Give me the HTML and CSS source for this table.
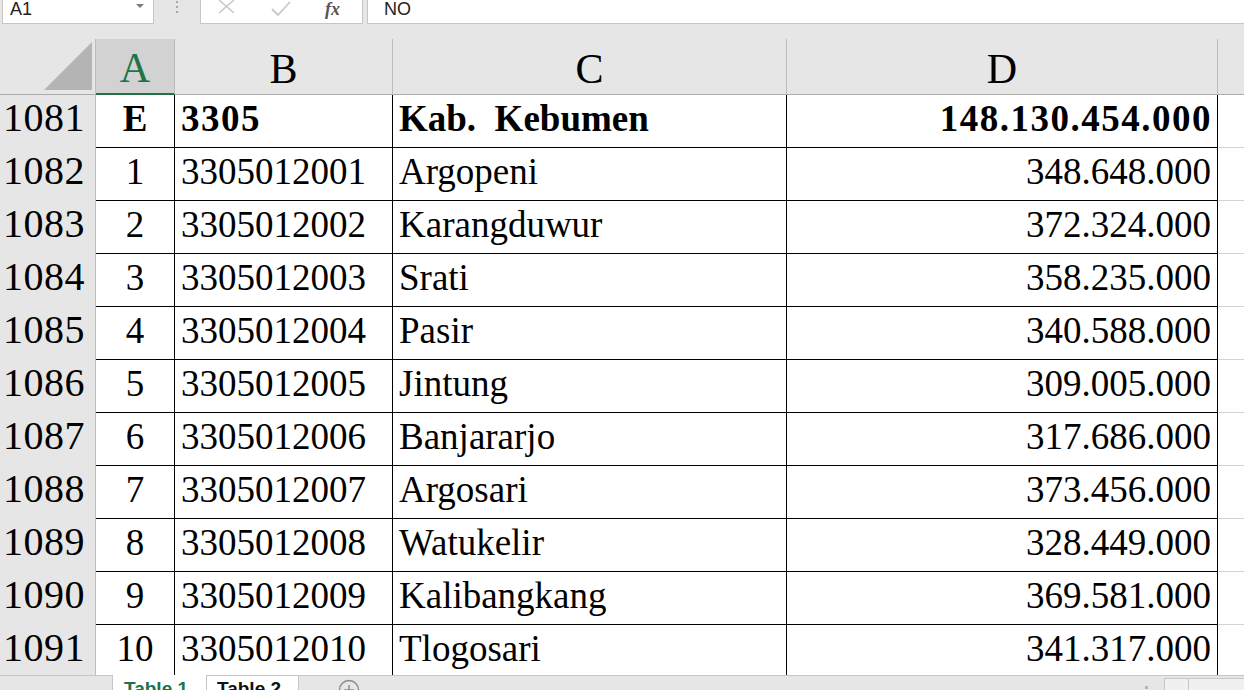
FILE: index.html
```html
<!DOCTYPE html>
<html>
<head>
<meta charset="utf-8">
<link rel="stylesheet" href="styles.css">
</head>
<body>
<div class="app">
  <div class="fbar">
    <div class="namebox">
      <span class="nb-text">A1</span>
      <svg class="nb-arrow" width="8" height="5" viewBox="0 0 8 5"><path d="M0 0H8L4 4Z" fill="#7a7a7a"/></svg>
    </div>
    <div class="dots"><i></i><i></i><i></i></div>
    <div class="btns">
      <svg class="ico" width="18" height="14" viewBox="0 0 18 14"><path d="M1 0L16 13M16 0L1 13" stroke="#c8c8c8" stroke-width="1.6" fill="none"/></svg>
      <svg class="ico" width="20" height="15" viewBox="0 0 20 15"><path d="M1 8L7 14L19 1" stroke="#c8c8c8" stroke-width="1.8" fill="none"/></svg>
      <span class="fx">fx</span>
    </div>
    <div class="finput">NO</div>
  </div>

  <div class="sheet">
    <div class="grid">
      <div class="corner"><svg width="48" height="48" viewBox="0 0 48 48"><path d="M48 0V48H0Z" fill="#b4b4b4"/></svg></div>
      <div class="ch sel">A</div>
      <div class="ch">B</div>
      <div class="ch">C</div>
      <div class="ch">D</div>
      <div class="ch last"></div>

      <div class="rh">1081</div>
      <div class="c ca b">E</div>
      <div class="c cl b num">3305</div>
      <div class="c cl b">Kab.&nbsp; Kebumen</div>
      <div class="c cr b num">148.130.454.000</div>
      <div class="c ce"></div>

      <div class="rh">1082</div>
      <div class="c ca">1</div>
      <div class="c cl">3305012001</div>
      <div class="c cl">Argopeni</div>
      <div class="c cr">348.648.000</div>
      <div class="c ce"></div>

      <div class="rh">1083</div>
      <div class="c ca">2</div>
      <div class="c cl">3305012002</div>
      <div class="c cl">Karangduwur</div>
      <div class="c cr">372.324.000</div>
      <div class="c ce"></div>

      <div class="rh">1084</div>
      <div class="c ca">3</div>
      <div class="c cl">3305012003</div>
      <div class="c cl">Srati</div>
      <div class="c cr">358.235.000</div>
      <div class="c ce"></div>

      <div class="rh">1085</div>
      <div class="c ca">4</div>
      <div class="c cl">3305012004</div>
      <div class="c cl">Pasir</div>
      <div class="c cr">340.588.000</div>
      <div class="c ce"></div>

      <div class="rh">1086</div>
      <div class="c ca">5</div>
      <div class="c cl">3305012005</div>
      <div class="c cl">Jintung</div>
      <div class="c cr">309.005.000</div>
      <div class="c ce"></div>

      <div class="rh">1087</div>
      <div class="c ca">6</div>
      <div class="c cl">3305012006</div>
      <div class="c cl">Banjararjo</div>
      <div class="c cr">317.686.000</div>
      <div class="c ce"></div>

      <div class="rh">1088</div>
      <div class="c ca">7</div>
      <div class="c cl">3305012007</div>
      <div class="c cl">Argosari</div>
      <div class="c cr">373.456.000</div>
      <div class="c ce"></div>

      <div class="rh">1089</div>
      <div class="c ca">8</div>
      <div class="c cl">3305012008</div>
      <div class="c cl">Watukelir</div>
      <div class="c cr">328.449.000</div>
      <div class="c ce"></div>

      <div class="rh">1090</div>
      <div class="c ca">9</div>
      <div class="c cl">3305012009</div>
      <div class="c cl">Kalibangkang</div>
      <div class="c cr">369.581.000</div>
      <div class="c ce"></div>

      <div class="rh">1091</div>
      <div class="c ca">10</div>
      <div class="c cl">3305012010</div>
      <div class="c cl">Tlogosari</div>
      <div class="c cr">341.317.000</div>
      <div class="c ce"></div>
    </div>
  </div>

  <div class="tabbar">
    <div class="nav">
      <svg width="8" height="8" viewBox="0 0 8 8"><path d="M6 0V8L1 4Z" fill="#c4c4c4"/></svg>
      <svg width="8" height="8" viewBox="0 0 8 8"><path d="M2 0V8L7 4Z" fill="#c4c4c4"/></svg>
    </div>
    <div class="tab active">Table 1</div>
    <div class="tab">Table 2</div>
    <div class="add"><svg width="22" height="22" viewBox="0 0 22 22"><circle cx="11" cy="11" r="9.5" stroke="#8a8a8a" stroke-width="1.4" fill="none"/><path d="M11 6V16M6 11H16" stroke="#8a8a8a" stroke-width="1.4"/></svg></div>
    <div class="spacer"></div>
    <div class="tdot"></div>
    <div class="sbox"><svg width="6" height="6" viewBox="0 0 6 6"><path d="M6 0V6H0Z" fill="#444"/></svg></div>
    <div class="strack"></div>
  </div>
</div>
</body>
</html>
```

FILE: styles.css
```css
html, body {
  margin: 0;
  padding: 0;
  background: #e6e6e6;
}
.app {
  width: 1244px;
  height: 690px;
  overflow: hidden;
  display: flex;
  flex-direction: column;
  background: #e6e6e6;
}

/* formula bar */
.fbar {
  height: 39px;
  flex: none;
  display: flex;
  align-items: flex-start;
  font-family: "Liberation Sans", Arial, sans-serif;
  font-size: 18px;
  color: #222;
}
.namebox {
  position: relative;
  margin-left: 2px;
  width: 152px;
  height: 24px;
  box-sizing: border-box;
  background: #fff;
  border: 1px solid #c6c6c6;
  border-top: 0;
}
.nb-text {
  display: block;
  padding-left: 7px;
  line-height: 18px;
}
.nb-arrow {
  position: absolute;
  right: 9px;
  top: 4px;
}
.dots {
  width: 46px;
  display: flex;
  flex-direction: column;
  align-items: center;
  gap: 3px;
  padding-top: 1px;
}
.dots i {
  display: block;
  width: 2px;
  height: 2px;
  background: #a8a8a8;
}
.btns {
  width: 163px;
  height: 24px;
  box-sizing: border-box;
  background: #fff;
  border: 1px solid #c6c6c6;
  border-top: 0;
  display: flex;
  align-items: flex-start;
  padding-left: 17px;
  gap: 36px;
}
.btns .ico { display: block; }
.btns .ico:nth-child(2) { margin-top: 1px; margin-left: -1px; }
.fx {
  font-family: "Liberation Serif", serif;
  font-style: italic;
  font-weight: bold;
  font-size: 18px;
  line-height: 18px;
  color: #555;
  margin-left: -2px;
}
.finput {
  flex: 1;
  margin-left: 4px;
  height: 24px;
  box-sizing: border-box;
  background: #fff;
  border: 1px solid #c6c6c6;
  border-top: 0;
  border-right: 0;
  padding-left: 16px;
  line-height: 18px;
}

/* sheet */
.sheet {
  height: 636px;
  flex: none;
  overflow: hidden;
}
.grid {
  display: grid;
  grid-template-columns: 96px 79px 218px 394px 431px 26px;
  grid-template-rows: 56px repeat(11, 53px);
}
.corner {
  box-sizing: border-box;
  background: #e6e6e6;
  border-right: 1px solid #bdbdbd;
  border-bottom: 1px solid #ababab;
  display: flex;
  align-items: flex-end;
  justify-content: flex-end;
  padding: 0 3px 4px 0;
}
.corner svg { display: block; }
.ch {
  box-sizing: border-box;
  background: #e6e6e6;
  border-right: 1px solid #bdbdbd;
  border-bottom: 1px solid #ababab;
  font-family: "Liberation Serif", serif;
  font-size: 42px;
  line-height: 50px;
  padding-top: 5px;
  text-align: center;
  color: #000;
}
.ch.sel {
  background: #d2d2d2;
  color: #217346;
  border-bottom: 2px solid #217346;
  line-height: 49px;
}
.ch.last { border-right: 0; }
.rh {
  box-sizing: border-box;
  background: #e6e6e6;
  border-right: 1px solid #bdbdbd;
  font-family: "Liberation Serif", serif;
  font-size: 40px;
  line-height: 42px;
  padding-top: 2px;
  padding-left: 3px;
  color: #000;
  letter-spacing: 0.5px;
}
.c {
  box-sizing: border-box;
  background: #fff;
  border-right: 1px solid #000;
  border-bottom: 1px solid #000;
  font-family: "Liberation Serif", serif;
  font-size: 37px;
  line-height: 43px;
  padding-top: 2px;
  color: #000;
  white-space: nowrap;
  overflow: hidden;
}
.ca { text-align: center; }
.cl { padding-left: 6px; }
.cr { text-align: right; padding-right: 6px; }
.b { font-weight: bold; }
.num { letter-spacing: 1.5px; }
.cr.num { padding-right: 5px; }
.ce {
  border-right: 0;
  border-bottom: 1px solid #d4d4d4;
}

/* tab bar */
.tabbar {
  flex: 1;
  display: flex;
  align-items: stretch;
  border-top: 1px solid #c6c6c6;
  background: #e6e6e6;
  font-family: "Liberation Sans", Arial, sans-serif;
  font-size: 19px;
  font-weight: bold;
}
.nav {
  width: 113px;
  box-sizing: border-box;
  border-right: 1px solid #c6c6c6;
  display: flex;
  align-items: flex-end;
  gap: 24px;
  padding-left: 24px;
}
.nav svg { display: block; margin-bottom: -2px; }
.tab {
  width: 93px;
  box-sizing: border-box;
  background: #fff;
  padding: 2px 0 0 11px;
  line-height: 20px;
  color: #111;
  white-space: nowrap;
  overflow: hidden;
}
.tab.active {
  color: #217346;
  margin-top: -1px;
  padding-top: 4px;
}
.tab:not(.active) {
  border: 1px solid #c6c6c6;
  border-bottom: 0;
  margin-top: -1px;
  padding-left: 10px;
  padding-top: 3px;
}
.add {
  width: 100px;
  padding-left: 39px;
  box-sizing: border-box;
  padding-top: 3px;
}
.add svg { display: block; }
.spacer { flex: 1; }
.tdot {
  width: 3px;
  height: 3px;
  background: #b4b4b4;
  margin-top: 10px;
  margin-right: 16px;
}
.sbox {
  width: 25px;
  margin-top: 2px;
  box-sizing: border-box;
  border: 1px solid #c6c6c6;
  border-bottom: 0;
  background: #f0f0f0;
  display: flex;
  justify-content: center;
  align-items: flex-end;
}
.sbox svg { display: block; margin-bottom: 0; }
.strack {
  width: 55px;
  margin-top: 2px;
  background: #f0f0f0;
  border-top: 1px solid #c6c6c6;
}
```
